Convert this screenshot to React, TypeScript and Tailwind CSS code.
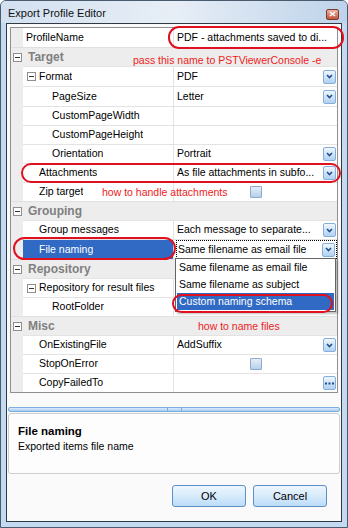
import React from 'react'

type Editor = 'drop' | 'check' | 'dots'

type Row =
  | { cat: string }
  | {
      label: string
      indent: number
      expander?: boolean
      value?: string
      editor?: Editor
      tall?: boolean
      selected?: boolean
    }

const rows: Row[] = [
  { label: 'ProfileName', indent: 0, value: 'PDF - attachments saved to di...' },
  { cat: 'Target' },
  { label: 'Format', indent: 1, expander: true, value: 'PDF', editor: 'drop', tall: true },
  { label: 'PageSize', indent: 2, value: 'Letter', editor: 'drop', tall: true },
  { label: 'CustomPageWidth', indent: 2 },
  { label: 'CustomPageHeight', indent: 2 },
  { label: 'Orientation', indent: 2, value: 'Portrait', editor: 'drop' },
  { label: 'Attachments', indent: 1, value: 'As file attachments in subfo...', editor: 'drop' },
  { label: 'Zip target', indent: 1, editor: 'check' },
  { cat: 'Grouping' },
  { label: 'Group messages', indent: 1, value: 'Each message to separate...', editor: 'drop' },
  { label: 'File naming', indent: 1, value: 'Same filename as email file', editor: 'drop', tall: true, selected: true },
  { cat: 'Repository' },
  { label: 'Repository for result files', indent: 1, expander: true },
  { label: 'RootFolder', indent: 2 },
  { cat: 'Misc' },
  { label: 'OnExistingFile', indent: 1, value: 'AddSuffix', editor: 'drop' },
  { label: 'StopOnError', indent: 1, editor: 'check' },
  { label: 'CopyFailedTo', indent: 1, editor: 'dots' },
]

const indentPad = ['pl-[3px]', 'pl-[16px]', 'pl-[29px]']

function Expander() {
  return (
    <svg width="9" height="9" viewBox="0 0 9 9" className="shrink-0">
      <rect x="0.5" y="0.5" width="8" height="8" fill="#fff" stroke="#8f8f8f" />
      <path d="M2 4.5 H7" stroke="#333" strokeWidth="1" />
    </svg>
  )
}

function SmallButton({ dots }: { dots?: boolean }) {
  return (
    <span className="flex items-center justify-center w-[13px] h-[14px] shrink-0 rounded-[2px] border border-[#86aedb] bg-linear-to-b from-[#f0f6fd] to-[#b0d1f2]">
      {dots ? (
        <svg width="9" height="3" viewBox="0 0 9 3">
          <rect x="0" y="0.5" width="2" height="2" fill="#1f4e8f" />
          <rect x="3.5" y="0.5" width="2" height="2" fill="#1f4e8f" />
          <rect x="7" y="0.5" width="2" height="2" fill="#1f4e8f" />
        </svg>
      ) : (
        <svg width="7" height="5" viewBox="0 0 7 5">
          <path d="M1 1 L3.5 3.5 L6 1" fill="none" stroke="#1f4e8f" strokeWidth="1.6" />
        </svg>
      )}
    </span>
  )
}

function Check() {
  return (
    <span className="w-[12px] h-[12px] rounded-[1px] border border-[#8ea9cb] bg-linear-to-b from-[#e4eef8] to-[#b7d1ec]" />
  )
}

function GridRow({ row, first }: { row: Row; first: boolean }) {
  if ('cat' in row) {
    return (
      <div className="flex items-center h-[19px] gap-[6px] pl-[2px] bg-[#ededed] border-t border-[#e0e0e0]">
        <Expander />
        <span className="text-[12px] font-bold text-[#7f7f7f]">{row.cat}</span>
      </div>
    )
  }
  return (
    <div className={`flex ${row.tall ? 'h-[20px]' : 'h-[19px]'}`}>
      <div className="w-[12px] bg-[#ededed]" />
      <div className={`flex flex-1 ${first ? '' : 'border-t border-[#e3e3e3]'}`}>
        <div
          className={`flex items-center w-[151px] border-r border-[#e3e3e3] ${
            row.expander ? 'pl-[4px] gap-[3px]' : indentPad[row.indent]
          } ${row.selected ? 'bg-[#316ac5] text-white' : ''}`}
        >
          {row.expander && <Expander />}
          <span className="truncate">{row.label}</span>
        </div>
        <div className="flex flex-1 items-center min-w-0">
          {row.editor === 'check' ? (
            <div className="flex flex-1 justify-center">
              <Check />
            </div>
          ) : (
            <div
              className={`flex flex-1 items-center min-w-0 h-full pr-[1px] ${
                row.selected ? 'ml-[2px] my-[1px] pl-[1px] border border-dotted border-black' : 'pl-[3px]'
              }`}
            >
              <span className="flex-1 truncate">{row.value}</span>
              {row.editor === 'drop' && <SmallButton />}
              {row.editor === 'dots' && <SmallButton dots />}
            </div>
          )}
        </div>
      </div>
    </div>
  )
}

export default function App() {
  return (
    <div className="relative w-[348px] h-[528px] overflow-hidden rounded-t-[6px] border border-[#4a5b6e] bg-[#c4daf1] font-['Liberation_Sans',Arial,sans-serif] text-[10.5px] text-black">
      {/* title bar */}
      <div className="flex items-center justify-between h-[22px] pl-[7px] pr-[8px] bg-linear-to-r from-[#d2e0f0] via-[#e7eef6] to-[#bed3ea]">
        <span className="text-[11px] text-[#111] pt-[2px]">Export Profile Editor</span>
        <span className="flex items-center justify-center mt-[4px] w-[13px] h-[11px] rounded-[2px] border border-[#7b3a2e] bg-linear-to-b from-[#eab3a6] to-[#c4533b]">
          <svg width="7" height="6" viewBox="0 0 7 6">
            <path d="M1 1 L6 5 M6 1 L1 5" stroke="#fff" strokeWidth="1.6" />
          </svg>
        </span>
      </div>

      {/* client area */}
      <div className="mx-[5px] h-[499px] border border-[#2f3a44] bg-[#fafafa] flex flex-col px-[3px] pt-[3px]">
        <div className="h-[366px] border border-[#8e9094] bg-white flex flex-col">
          {rows.map((r, i) => (
            <GridRow key={i} row={r} first={i === 0} />
          ))}
        </div>

        <div className="mt-[14px] -mx-[2px] h-[5px] rounded-[2px] border border-[#7eaee0] bg-linear-to-b from-[#dcecfb] to-[#a6cbf1] flex justify-center">
          <div className="w-[15px] h-full border-x border-[#7eaee0]" />
        </div>

        <div className="mt-[1px] -mx-[2px] h-[61px] rounded-[3px] border border-[#cfcfcf] bg-[#fdfdfd] pl-[9px] pt-[10px] leading-[15px]">
          <div className="text-[11.5px] font-bold">File naming</div>
          <div className="text-[10.5px]">Exported items file name</div>
        </div>

        <div className="mt-[11px] flex justify-end gap-[7px] pr-[11px]">
          {['OK', 'Cancel'].map((t) => (
            <button
              key={t}
              className="w-[74px] h-[22px] rounded-[3px] border border-[#5f8fc7] bg-linear-to-b from-[#eef6fe] via-[#d7ebfc] to-[#bcdcf8] text-[11px] text-black"
            >
              {t}
            </button>
          ))}
        </div>
      </div>

      {/* open drop-down list */}
      <div className="absolute left-[174px] top-[257px] w-[161px] border border-[#646464] bg-white shadow-[2px_2px_2px_rgba(0,0,0,0.25)] pb-[1px]">
        <div className="h-[17px] flex items-center pl-[3px]">Same filename as email file</div>
        <div className="h-[17px] flex items-center pl-[3px]">Same filename as subject</div>
        <div className="h-[17px] mx-[1px] flex items-center pl-[2px] bg-[#316ac5] text-white">Custom naming schema</div>
      </div>

      {/* annotations */}
      <div className="absolute left-[167px] top-[25px] w-[176px] h-[23px] rounded-[11px] border-2 border-[#e0101e]" />
      <div className="absolute left-[132px] top-[53px] leading-[12px] text-[#ec1c24]">pass this name to PSTViewerConsole -e</div>
      <div className="absolute left-[20px] top-[162px] w-[320px] h-[20px] rounded-full border-2 border-[#e0101e]" />
      <div className="absolute left-[101px] top-[185px] leading-[12px] text-[#ec1c24]">how to handle attachments</div>
      <div className="absolute left-[12px] top-[236px] w-[163px] h-[23px] rounded-[12px] border-2 border-[#e0101e]" />
      <div className="absolute left-[171px] top-[293px] w-[161px] h-[19px] rounded-[10px] border-2 border-[#e0101e]" />
      <div className="absolute left-[197px] top-[319px] leading-[12px] text-[#ec1c24]">how to name files</div>
    </div>
  )
}
